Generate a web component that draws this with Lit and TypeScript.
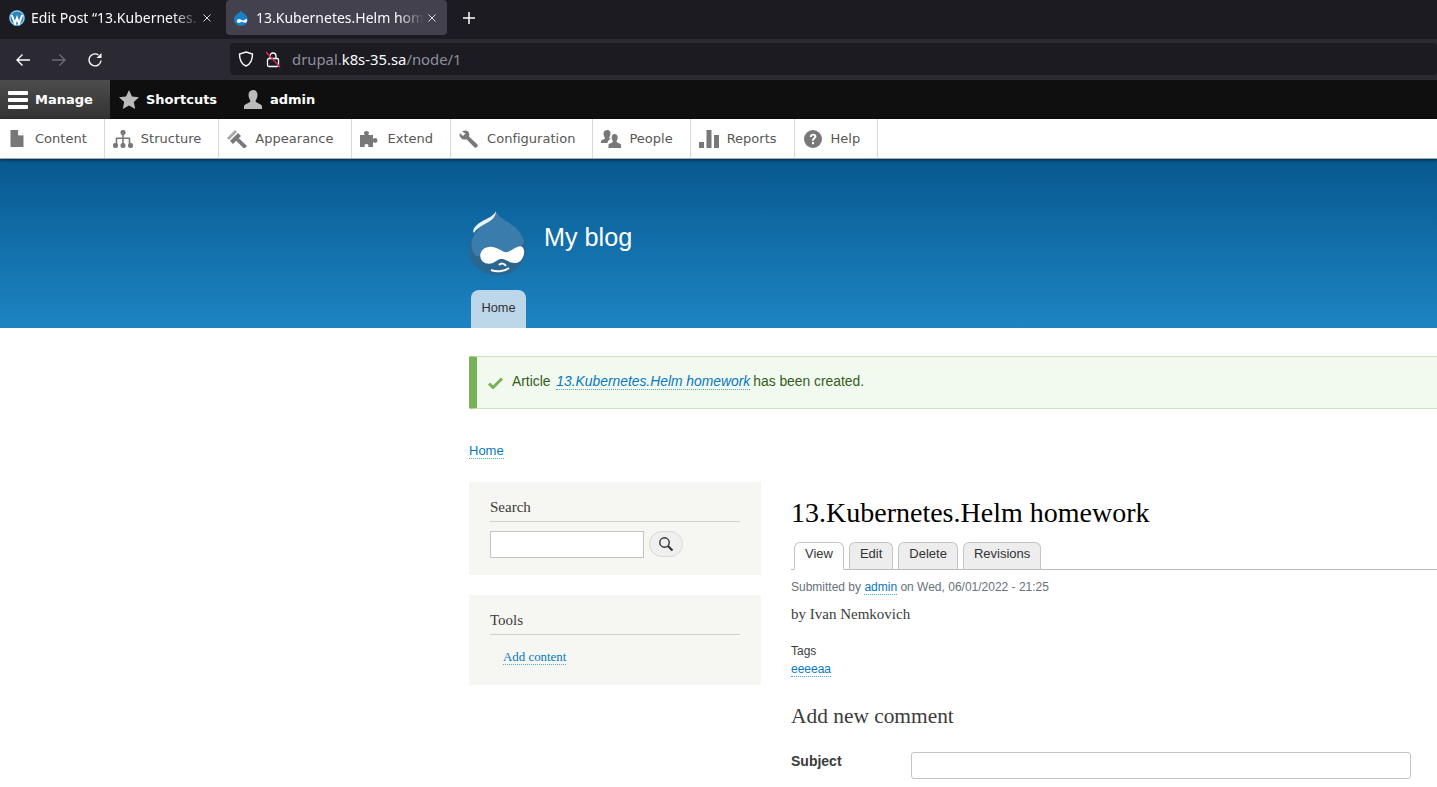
import { LitElement, html, css, svg } from "lit";
import { customElement } from "lit/decorators.js";

const DROP = "M27 1c1 5 9 9 16 14 9 6 14 15 14 25 0 15-13 25-28 25S0 55 0 40c0-10 5-18 13-24 7-4 13-8 14-15z";
const FACE = "M12 46c0-6 6-10 13-8 5 1 8 5 12 5 5 0 10-6 14-6 3 0 4 4 3 8-2 6-6 8-10 7-4 0-7-4-12-4-5 1-7 5-12 5-5 0-8-3-8-7z";

const drupalLogo = (size: number) => html`<svg width=${size} height=${size * 66 / 58} viewBox="0 0 58 66">
  <path d=${DROP} fill="#2a6690"/>
  <path d="M27 1c1 5 9 9 16 14 6 4 10 10 12 16-2 10-12 12-22 13-10 2-18 3-26 2C1 40-1 28 13 16c7-4 13-8 14-15z" fill="#3a7cab"/>
  <path d="M27 1c0 6-5 10-11 13-5 3-9 5-11 9-2-2 0-7 7-11 7-4 13-6 15-11z" fill="#fff" opacity=".92"/>
  <path d=${FACE} fill="#fff" stroke="#fff" stroke-width="1.500"/>
  <path d="M22 60c5 2 13 2 18-2M30 55c2-2 5-2 7 1" fill="none" stroke="#fff" stroke-width="2"/>
</svg>`;

const g = "#787878";
const icons = {
  content: svg`<path d="M1 0h8l5 5v12H1z" fill="${g}"/><path d="M9 0v5h5" fill="#fff" stroke="#fff" stroke-width=".8"/>`,
  structure: svg`<g fill="${g}"><rect x="7.500" y="0" width="5" height="5" rx="2"/><rect x="0" y="13" width="5" height="5" rx="2"/><rect x="7.500" y="13" width="5" height="5" rx="2"/><rect x="15" y="13" width="5" height="5" rx="2"/><path d="M9.200 4h1.600v3.400h6.500v6h-1.600V9h-4.900v5H9.200V9H4.300v4.400H2.700V7.400h6.500z"/></g>`,
  appearance: svg`<g fill="${g}"><path d="M0 8l8-8 2 2-8 8z" opacity=".65"/><path d="M3 11L11 3l3 3-8 8z"/><path d="M11.500 8l8.500 8-2.800 2.800L9 10.500z"/></g>`,
  extend: svg`<path d="M0 5h5c-1.500-1-1.500-4 1.500-4s3 3 1.500 4h5v4c1-1.500 4.500-1.500 4.500 1.500S14 13 13 12v5H8c1-1.500 .5-3-1.500-3S4 15.500 5 17H0z" fill="${g}"/>`,
  config: svg`<path d="M3 1.500C5 0 8 0 9.500 2c1 1.500 1 3 .5 4.500l8 7.500c1 1 1 2.200 0 3-1 1-2.200 .8-3 0L7.500 9.200C5.500 10 3.500 9.500 2 8 .5 6.500 .2 4.500 1 3l3 3 2.500-2.500z" fill="${g}"/>`,
  people: svg`<g fill="${g}"><path d="M6.500 0c2 0 3 1.500 3 3.500 0 2-1 3.500-1.500 4.500L10 9c-2 .5-3.500 2-3.500 4H0v-2c1-1.500 3.500-1.500 4-3-.5-1-1.500-2.500-1.500-4.500 0-2 1.700-3.500 4-3.500z"/><path d="M13.500 4c2 0 3.200 1.500 3.200 3.500 0 1.800-.8 3-1.300 4 .5 1.500 3 1.300 4.600 3V18H7.500v-3.500c1.500-1.700 4-1.500 4.500-3-.5-1-1.300-2.200-1.300-4 0-2 1-3.500 2.800-3.500z"/></g>`,
  reports: svg`<g fill="${g}"><rect x="0" y="12" width="5" height="6"/><rect x="7.500" y="0" width="5" height="18"/><rect x="15" y="5" width="5" height="13"/></g>`,
  help: svg`<circle cx="9" cy="9" r="9" fill="${g}"/><path d="M5.800 7c0-2 1.500-3.200 3.400-3.200s3.200 1.100 3.200 2.800c0 2.300-2.500 2.400-2.500 4.200H8c0-2.800 2.300-2.800 2.300-4.200 0-.7-.5-1.100-1.200-1.100-.8 0-1.300.5-1.300 1.500z" fill="#fff"/><rect x="8" y="12" width="2" height="2.200" fill="#fff"/>`,
};

const menu: [string, keyof typeof icons, number][] = [
  ["Content", "content", 15],
  ["Structure", "structure", 20],
  ["Appearance", "appearance", 20],
  ["Extend", "extend", 20],
  ["Configuration", "config", 20],
  ["People", "people", 20],
  ["Reports", "reports", 20],
  ["Help", "help", 18],
];

@customElement("app-root")
export class AppRoot extends LitElement {
  static styles = css`
    :host { display: block; width: 1437px; height: 787px; overflow: hidden; background: #fff; font-family: "Liberation Sans", Arial, sans-serif; }
    a { text-decoration: none; }

    .tabs { height: 39px; background: #1c1b22; display: flex; align-items: flex-start; box-sizing: border-box; padding-left: 2px; font-family: "Noto Sans", "Open Sans", sans-serif; font-size: 14px; color: #fbfbfe; }
    .tab { height: 35px; width: 221px; border-radius: 4px; box-sizing: border-box; display: flex; align-items: center; padding: 0 11px 0 7px; gap: 6px; }
    .tab.first { width: 224px; padding-right: 15px; }
    .tab.active { background: #42414d; gap: 7px; }
    .tab-title { flex: 1; min-width: 0; margin-right: -3px; white-space: nowrap; -webkit-mask-image: linear-gradient(to right, #000 84%, transparent 100%); mask-image: linear-gradient(to right, #000 84%, transparent 100%); }
    .tab svg { flex: none; }
    .newtab { margin-left: 16px; height: 35px; display: flex; align-items: center; }

    .nav { height: 41px; background: #2b2a33; display: flex; align-items: center; box-sizing: border-box; padding-left: 15px; }
    .nav-btns { display: flex; align-items: center; gap: 20px; width: 215px; }
    .urlbar { width: 1207px; height: 32px; margin-top: -1px; background: #1c1b22; border-radius: 4px; display: flex; align-items: center; padding-left: 8px; gap: 11px; font-family: "Noto Sans", "Open Sans", sans-serif; font-size: 14.85px; color: #8f8f9d; box-sizing: border-box; }
    .urlbar b { font-weight: 400; color: #fbfbfe; }
    .url { white-space: nowrap; }

    .toolbar { height: 39px; background: #0f0f0f; display: flex; color: #fff; font-family: "DejaVu Sans", sans-serif; font-weight: 700; font-size: 13px; }
    .tb { display: flex; align-items: center; gap: 8px; padding: 0 9px; height: 39px; box-sizing: border-box; }
    .tb.manage { width: 110px; padding-left: 8px; background: linear-gradient(#4c4c4c, #333); gap: 7px; }
    .tb.sh { padding-left: 9px; width: 125px; gap: 7px; }
    .tb.ad { padding-left: 9px; gap: 8px; }

    .tray { height: 40px; background: #fff; display: flex; box-sizing: border-box; border-bottom: 1px solid #aaa; font-family: "DejaVu Sans", sans-serif; font-size: 13px; color: #565656; position: relative; box-shadow: 0 1px 3px rgba(0,0,0,.55); }
    .tray-item { height: 39px; display: flex; align-items: center; gap: 8px; padding: 0 17px 0 8px; border-right: 1px solid #d9d9d9; box-sizing: content-box; letter-spacing: .01px; }
    .tray-item:first-child { padding-left: 7px; }

    .header { height: 169px; background: linear-gradient(#07598f, #1d84c3); box-sizing: border-box; padding: 51px 0 0 469px; display: flex; flex-direction: column; }
    .brand { display: flex; align-items: flex-start; height: 80px; gap: 17px; color: #fff; font-size: 25.2px; }
    .brand span { margin-top: 11px; line-height: 32px; }
    .home-tab { margin-left: 2px; width: 55px; height: 38px; background: #bcd6ea; border-radius: 8px 8px 0 0; color: #333; font-size: 12.8px; text-align: center; line-height: 36px; box-sizing: border-box; }

    .page { margin-left: 469px; width: 1100px; }
    .msg { margin-top: 28px; height: 53px; box-sizing: border-box; background: #f2f9ee; border: 1px solid #c9e4b6; border-left: 8px solid #77b259; border-radius: 2px; display: flex; align-items: center; padding: 0 0 0 11px; font-size: 13.85px; color: #325e1c; gap: 9px; }
    .msg span { margin-bottom: 3px; }
    .msg a { font-style: italic; margin: 0 3px 0 2px; }
    a.lnk { color: #0678be; border-bottom: 1px dotted #4aa6dc; }
    .crumb { margin-top: 33px; height: 17px; font-size: 13px; line-height: 17px; }
    .crumb a { display: inline-block; line-height: 15px; }

    .cols { display: flex; margin-top: 23px; gap: 30px; }
    .side { width: 292px; display: flex; flex-direction: column; gap: 20px; font-family: "Liberation Serif", serif; }
    .block { background: #f6f6f2; box-sizing: border-box; padding: 16px 21px 0; }
    .block h2 { margin: 0; font-weight: 400; font-size: 15px; line-height: 18px; color: #3b3b3b; padding-bottom: 5px; border-bottom: 1px solid #d0d0cc; }
    .b1 { height: 93px; }
    .b2 { height: 90px; }
    .search { display: flex; margin-top: 9px; gap: 5px; }
    .search-in { width: 154px; height: 27px; box-sizing: border-box; background: #fff; border: 1px solid #c4c4c4; }
    .search-btn { width: 34px; height: 26px; box-sizing: border-box; border-radius: 13px; background: #f0f0f0; border: 1px solid #d8d8d8; display: flex; align-items: center; justify-content: center; }
    .add { margin: 14px 0 0 13px; font-size: 12.9px; line-height: 16px; }
    .add a { display: inline-block; line-height: 14px; }

    .main { width: 646px; }
    h1 { margin: 13px 0 0; font-family: "Liberation Serif", serif; font-weight: 400; font-size: 28px; line-height: 36px; color: #000; white-space: nowrap; }
    .local { margin-top: 11px; height: 28px; box-sizing: border-box; border-bottom: 1px solid #bbb; display: flex; padding-left: 3px; gap: 5px; font-size: 13px; color: #333; }
    .t { height: 28px; box-sizing: border-box; border: 1px solid #c4c4c4; border-bottom: 1px solid #bbb; border-radius: 6px 6px 0 0; background: #ededed; padding: 0 10px; line-height: 22px; }
    .t.on { background: #fff; border-bottom-color: #fff; }
    .meta { margin-top: 10px; font-size: 12px; line-height: 15px; color: #68717a; }
    .meta a { display: inline-block; line-height: 13px; }
    .by { margin-top: 10px; font-family: "Liberation Serif", serif; font-size: 15px; line-height: 18px; color: #3b3b3b; }
    .tags { margin-top: 19px; font-size: 12px; line-height: 18px; color: #3b3b3b; }
    .tags a { display: inline-block; line-height: 14px; }
    h2.cm { margin: 25px 0 0; font-family: "Liberation Serif", serif; font-weight: 400; font-size: 21.4px; line-height: 26px; color: #3b3b3b; }
    .subject { margin-top: 23px; display: flex; }
    .subject label { width: 120px; font-weight: 700; font-size: 14px; line-height: 18px; color: #3b3b3b; }
    .subject div { width: 500px; height: 27px; box-sizing: border-box; border: 1px solid #c4c4c4; border-radius: 3px; background: #fff; }
  `;

  render() {
    return html`
      <div class="tabs">
        <div class="tab first">
          <svg width="16" height="16" viewBox="0 0 16 16"><circle cx="8" cy="8" r="8" fill="#2a86b8"/><circle cx="8" cy="8" r="7" fill="none" stroke="#fff" stroke-width=".7"/><path d="M2.800 5l3.200 8.500 2-5.500 2 5.500L13.200 5" fill="none" stroke="#fff" stroke-width="2"/></svg>
          <span class="tab-title">Edit Post “13.Kubernetes.</span>
          <svg width="8" height="8" viewBox="0 0 8 8"><path d="M.5 .5l7 7M7.500 .5l-7 7" stroke="#ddd" stroke-width="1"/></svg>
        </div>
        <div class="tab active">
          <svg width="16" height="16" viewBox="0 0 58 66"><path d=${DROP} fill="#1a7fc4"/><path d=${FACE} fill="#fff"/></svg>
          <span class="tab-title">13.Kubernetes.Helm hom</span>
          <svg width="8" height="8" viewBox="0 0 8 8"><path d="M.5 .5l7 7M7.500 .5l-7 7" stroke="#ddd" stroke-width="1"/></svg>
        </div>
        <div class="newtab"><svg width="12" height="12" viewBox="0 0 12 12"><path d="M6 0v12M0 6h12" stroke="#fbfbfe" stroke-width="1.500"/></svg></div>
      </div>

      <div class="nav">
        <div class="nav-btns">
          <svg width="16" height="16" viewBox="0 0 16 16"><path d="M15 8H2M7.500 2.500L2 8l5.500 5.500" fill="none" stroke="#fbfbfe" stroke-width="1.400"/></svg>
          <svg width="16" height="16" viewBox="0 0 16 16"><path d="M1 8h13M8.500 2.500L14 8l-5.500 5.500" fill="none" stroke="#6d6c75" stroke-width="1.400"/></svg>
          <svg width="16" height="16" viewBox="0 0 16 16"><path d="M14 8.500A6 6 0 1 1 11.500 3" fill="none" stroke="#fbfbfe" stroke-width="1.400"/><path d="M14.500 1v5h-5z" fill="#fbfbfe"/></svg>
        </div>
        <div class="urlbar">
          <svg width="16" height="16" viewBox="0 0 16 16"><path d="M8 1l6.500 2c0 6-1.500 10-6.500 12C3 13 1.500 9 1.500 3z" fill="none" stroke="#fbfbfe" stroke-width="1.400"/></svg>
          <svg width="16" height="17" viewBox="0 0 16 17"><rect x="2.500" y="7.500" width="11" height="8" rx="1.500" fill="none" stroke="#fbfbfe" stroke-width="1.300"/><path d="M5 7.500V5a3 3 0 0 1 6 0v2.500" fill="none" stroke="#fbfbfe" stroke-width="1.300"/><path d="M1 1l14 15" stroke="#e22850" stroke-width="1.400"/></svg>
          <span class="url">drupal.<b>k8s-35.sa</b>/node/1</span>
        </div>
      </div>

      <div class="toolbar">
        <div class="tb manage">
          <svg width="20" height="18" viewBox="0 0 20 18"><g fill="#fff"><rect y="0" width="20" height="4" rx="1"/><rect y="7" width="20" height="4" rx="1"/><rect y="14" width="20" height="4" rx="1"/></g></svg>
          Manage
        </div>
        <div class="tb sh">
          <svg width="20" height="19" viewBox="0 0 20 19"><path d="M10 0l3 6.500 7 .8-5.200 4.700L16.200 19 10 15.400 3.800 19l1.400-7L0 7.300l7-.8z" fill="#bbb"/></svg>
          Shortcuts
        </div>
        <div class="tb ad">
          <svg width="18" height="19" viewBox="0 0 18 19"><path d="M9 0c3 0 4.500 2.200 4.500 5 0 2.500-1.300 4.500-2 6 1 2.500 5.500 2.500 6.500 5v3H0v-3c1-2.500 5.500-2.500 6.500-5-.7-1.500-2-3.500-2-6 0-2.800 1.500-5 4.500-5z" fill="#bbb"/></svg>
          admin
        </div>
      </div>

      <div class="tray">
        ${menu.map(([label, ic, w]) => html`<div class="tray-item">
          <svg width="20" height="18" viewBox="0 0 ${w} 18">${icons[ic]}</svg>${label}
        </div>`)}
      </div>

      <div class="header">
        <div class="brand">${drupalLogo(58)}<span>My blog</span></div>
        <div class="home-tab">Home</div>
      </div>

      <div class="page">
        <div class="msg">
          <svg width="15" height="12" viewBox="0 0 15 12"><path d="M1 6.500l4 4 9-9" fill="none" stroke="#77b259" stroke-width="3"/></svg>
          <span>Article <a class="lnk" href="#">13.Kubernetes.Helm homework</a>has been created.</span>
        </div>
        <div class="crumb"><a class="lnk" href="#">Home</a></div>
        <div class="cols">
          <div class="side">
            <div class="block b1">
              <h2>Search</h2>
              <div class="search">
                <div class="search-in"></div>
                <div class="search-btn"><svg width="16" height="16" viewBox="0 0 16 16"><circle cx="6.500" cy="6.500" r="4.700" fill="none" stroke="#333" stroke-width="1.400"/><path d="M10 10l4.500 4.500" stroke="#333" stroke-width="2.200"/></svg></div>
              </div>
            </div>
            <div class="block b2">
              <h2>Tools</h2>
              <div class="add"><a class="lnk" href="#">Add content</a></div>
            </div>
          </div>
          <div class="main">
            <h1>13.Kubernetes.Helm homework</h1>
            <div class="local">
              <div class="t on">View</div><div class="t">Edit</div><div class="t">Delete</div><div class="t">Revisions</div>
            </div>
            <div class="meta">Submitted by <a class="lnk" href="#">admin</a> on Wed, 06/01/2022 - 21:25</div>
            <div class="by">by Ivan Nemkovich</div>
            <div class="tags">Tags<br /><a class="lnk" href="#">eeeeaa</a></div>
            <h2 class="cm">Add new comment</h2>
            <div class="subject"><label>Subject</label><div></div></div>
          </div>
        </div>
      </div>
    `;
  }
}
